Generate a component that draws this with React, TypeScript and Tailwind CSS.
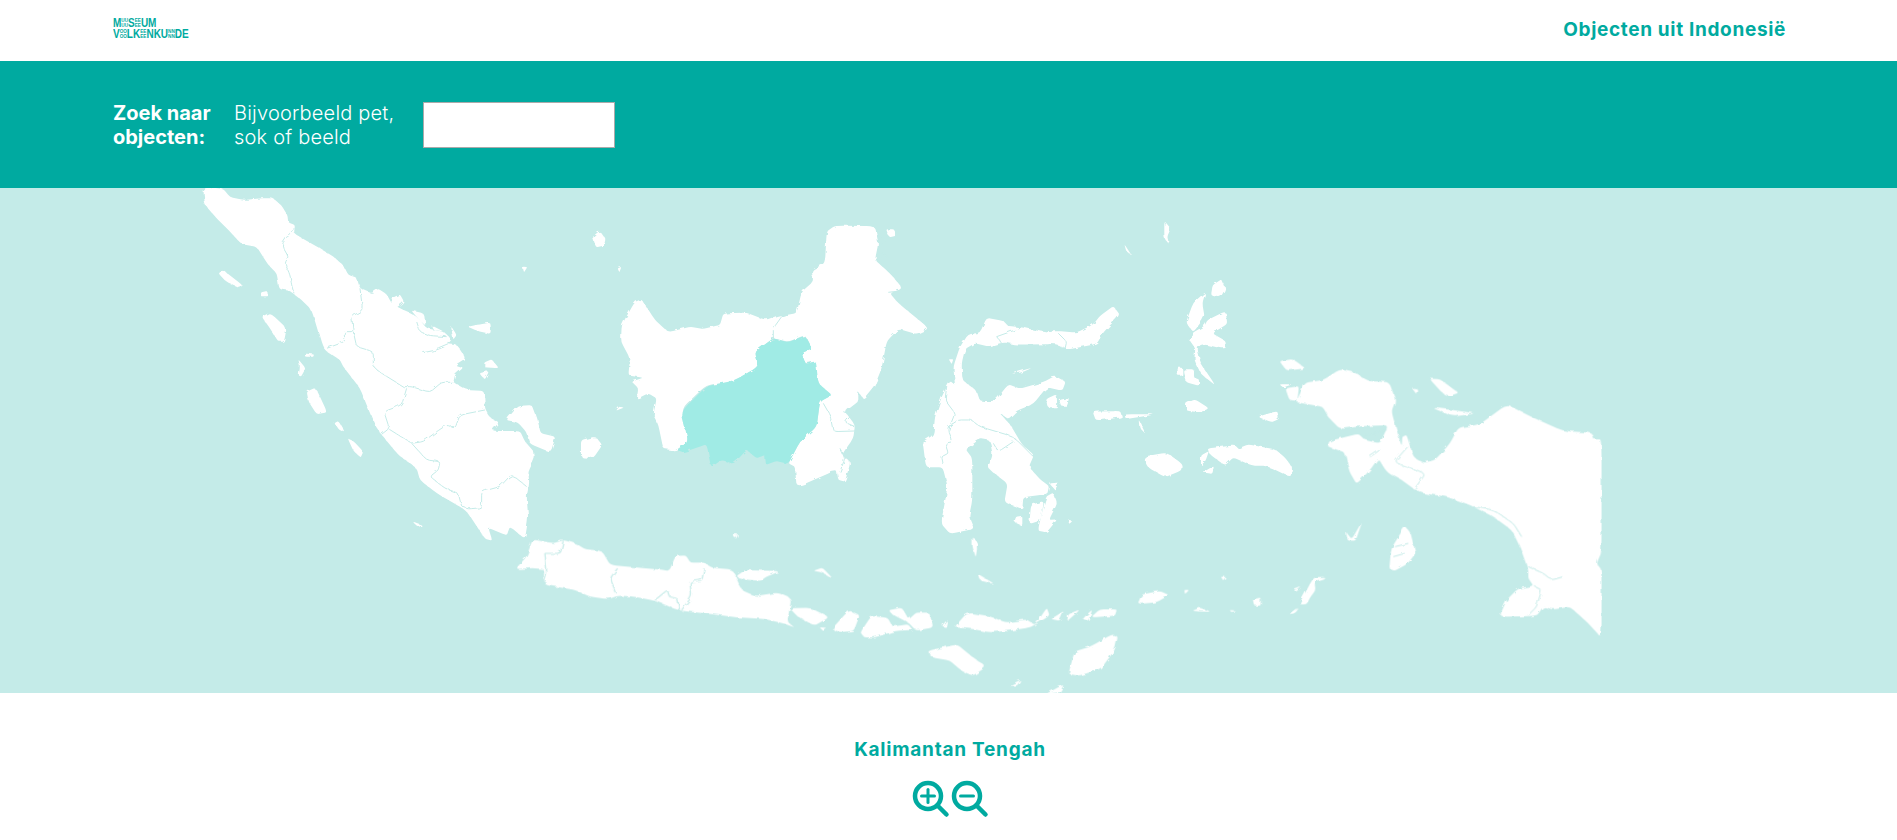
import { ReactElement } from "react";

const LAND = "#ffffff";
const SEA = "#c4ebe8";
const ACTIVE = "#a0ebe5";

interface MapPart {
  // placement of the part in page coordinates
  transform: string;
  land: string[];
  borders?: string[];
}

// cuts only the tips of the corners, so thin islands keep their size
const softPath = (points: string, closed: boolean) => {
  const p = points.split(" ").map((pair) => pair.split(",").map(Number));
  const toward = (a: number[], b: number[]) => `${a[0] + (b[0] - a[0]) * 0.22} ${a[1] + (b[1] - a[1]) * 0.22}`;
  let d = "";
  p.forEach((pt, i) => {
    const prev = p[(i - 1 + p.length) % p.length];
    const next = p[(i + 1) % p.length];
    if (!closed && (i === 0 || i === p.length - 1)) {
      d += `${i === 0 ? "M" : "L"}${pt[0]} ${pt[1]} `;
      return;
    }
    d += `${d ? "L" : "M"}${toward(pt, prev)} Q${pt[0]} ${pt[1]} ${toward(pt, next)} `;
  });
  return closed ? d + "Z" : d;
};

const sumatra: MapPart = {
  transform: "translate(190 185) scale(0.3333)",
  land: [
    "40,15 70,8 100,12 120,36 160,45 210,40 250,40 275,62 292,90 295,112 315,120 312,145 345,165 390,190 430,215 460,240 475,270 500,278 510,310 545,325 565,311 590,328 605,355 630,370 665,385 690,405 710,430 760,440 782,460 770,475 800,478 827,520 795,540 820,548 795,570 790,592 830,615 882,618 885,670 900,698 927,712 905,738 990,738 1005,770 1032,800 1035,820 1015,860 1018,895 1010,935 1015,1000 1005,1062 960,1025 950,1052 895,1028 907,1067 885,1062 835,985 810,965 740,925 690,885 680,850 625,810 575,750 555,720 530,660 510,610 460,545 450,525 400,492 365,375 335,345 300,318 268,312 260,265 235,240 200,185 155,178 120,140 75,95 45,60",
    "85,265 100,256 157,300 150,310 110,292",
    "215,395 240,383 290,430 282,470 265,470 240,430",
    "345,506 372,508 370,515 345,515",
    "325,523 347,550 334,574 326,572 330,545",
    "350,620 377,608 412,682 380,688 356,650",
    "433,715 445,708 464,740 445,732",
    "473,760 490,768 520,800 512,818 490,797",
    "668,1010 697,1020 685,1027",
    "603,340 630,328 642,350 620,368 606,360",
    "663,376 702,385 707,422 690,407",
    "948,705 985,663 1027,660 1042,700 1052,745 1097,755 1082,802 1020,777 1008,740 983,712",
    "1173,765 1217,755 1237,780 1210,820 1173,817",
    "833,425 870,418 902,413 902,447 860,437",
    "883,532 905,523 927,550 883,547",
    "868,565 897,558 885,584",
    "723,420 762,440 730,434",
    "783,423 800,450 790,464",
    "1208,155 1228,138 1247,160 1242,182 1218,187",
    "213,322 232,318 234,334 213,334",
    "998,245 1012,246 1002,262",
  ],
  borders: [
    "312,130 295,150 275,180 295,215 285,235 300,270 305,300 312,325",
    "510,310 518,375 485,395 490,440 462,440 465,470 410,490",
    "490,440 500,485 550,500 550,545 575,565 640,605",
    "640,605 665,605 720,622 755,592 790,592",
    "650,610 635,660 582,680 598,730 575,748",
    "885,675 810,690 795,730 770,720 740,740 700,770 665,775 625,750 598,733",
    "665,775 710,825 750,830 745,855 720,875 765,910 805,925 815,965 835,972 875,968 875,920 930,905 965,868 1010,905",
    "680,410 690,440 720,452 770,455",
    "700,503 740,495 780,478",
  ],
};

const java: MapPart = {
  transform: "translate(500 530) scale(0.408 0.3333)",
  land: [
    "38,117 65,80 80,28 130,40 155,30 185,40 210,58 250,63 270,105 340,113 390,118 415,123 430,78 455,76 467,98 500,98 520,113 570,118 592,180 625,198 680,188 714,205 704,275 722,292 700,282 650,267 580,262 520,252 440,242 380,212 330,200 290,197 265,207 220,200 185,180 108,164 108,117 80,114",
    "578,140 600,120 687,123 650,142 640,152 610,150",
    "710,235 760,233 807,262 770,287 730,260",
    "813,297 855,241 882,255 867,302 835,307",
    "883,307 910,258 950,263 962,290 1000,283 1012,300 970,302 920,322 893,322",
    "953,240 985,233 1002,268 1020,248 1052,248 1062,292 1020,302 1000,277 960,252",
    "1113,292 1145,248 1200,258 1240,278 1290,268 1312,285 1340,233 1347,257 1300,292 1250,302 1200,307 1160,297",
    "1350,267 1382,243 1372,272",
    "1393,252 1422,238 1390,274",
    "1428,267 1452,238 1442,272",
    "1448,262 1470,238 1512,238 1507,257",
    "1048,362 1120,343 1152,375 1192,410 1160,437 1130,422 1103,392 1058,382",
    "1393,432 1408,365 1450,348 1500,313 1514,320 1507,360 1472,417 1420,437",
    "1338,492 1382,463 1372,487",
    "1248,467 1277,448 1267,467",
    "768,122 790,113 817,147 790,127",
    "1158,20 1170,50 1166,82 1158,50",
    "1173,133 1212,162 1178,152",
    "1083,287 1097,268 1092,292",
    "783,292 800,293 790,300",
    "570,15 584,13 578,26",
  ],
  borders: [
    "110,70 148,70 155,32",
    "110,70 115,130 108,160",
    "288,115 270,145 285,190",
    "500,115 495,150 465,155 470,200 445,240",
    "380,210 410,180 415,200 435,205 440,240",
  ],
};

const kalimantan: MapPart = {
  transform: "translate(600 185) scale(0.3333)",
  land: [
    "65,420 105,350 125,343 165,405 205,442 270,425 310,432 360,420 370,385 440,383 495,405 540,390 545,395 520,460 465,500 475,545 400,590 320,600 245,670 265,770 225,797 190,792 175,720 160,690 170,640 145,625 110,642 115,610 95,590 130,578 85,572 90,520 63,470",
    "520,460 525,420 545,392 590,385 605,320 640,290 635,255 675,235 680,140 705,122 825,123 835,175 825,225 870,265 907,310 870,325 895,355 987,430 950,447 895,432 860,470 845,550 825,600 790,642 775,620 775,650 735,680 765,720 760,760 725,810 752,830 735,890 715,885 710,855 590,907 585,845 565,835 600,770 650,725 660,650 695,630 655,595 645,530 615,535 605,505 635,490 615,450 565,470",
    "858,133 882,133 890,152 868,157",
    "58,665 72,668 48,677",
    "53,250 64,246 58,262",
  ],
  borders: [
    "670,655 690,690 700,740 765,738",
    "545,395 520,430 520,460",
    "835,150 860,165 830,195 865,215 825,225",
    "865,322 900,318",
    "730,680 755,690 735,712 765,725",
    "850,560 825,600",
    "720,790 735,820 720,860",
  ],
};

const kalimantanTengah =
  "520,460 565,472 615,452 635,490 605,505 618,538 648,528 655,595 697,630 660,650 650,725 600,770 565,837 530,828 498,840 495,810 470,820 440,795 400,837 365,825 333,847 320,778 290,788 250,802 230,795 265,770 243,680 320,603 400,588 475,545 465,500";

const sulawesi: MapPart = {
  transform: "translate(900 200) scale(0.3333)",
  land: [
    "68,725 100,705 105,650 125,590 150,543 165,555 160,500 180,440 205,403 240,398 260,353 310,363 325,378 370,383 440,398 470,393 530,398 580,373 600,348 640,318 660,345 610,397 590,432 500,449 470,432 350,434 310,427 265,439 225,430 195,447 185,490 187,540 230,573 240,603 285,603 325,553 360,566 430,546 465,528 497,545 487,572 440,562 400,612 350,632 325,657 300,640 330,673 367,735 402,765 387,800 420,838 447,858 442,882 370,892 367,927 313,907 323,850 263,805 278,765 270,722 240,717 197,748 217,775 217,900 207,950 222,987 150,1002 123,970 143,860 128,802 78,802",
    "438,597 470,583 472,622 443,622",
    "478,600 507,593 502,617 483,617",
    "438,890 460,878 472,910 447,960 472,958 440,997 413,992",
    "393,915 432,903 422,962 388,972",
    "348,950 367,948 367,977 343,967",
    "448,850 477,848 465,870",
    "333,522 397,503 367,517",
    "220,1010 232,1030 225,1052",
    "146,478 160,478 155,492",
    "793,63 812,85 802,110 807,132 793,115",
    "676,136 697,167 682,157",
    "858,367 880,308 917,276 907,310 914,352 880,397",
    "938,255 965,238 977,265 962,292 933,287",
    "923,360 977,333 982,372 937,400 977,423 977,447 905,432 892,445 902,490 947,557 903,522 883,480 886,445 868,420 878,398 913,378",
    "848,508 882,508 882,533 897,538 897,557 858,547",
    "833,503 847,503 847,527 833,527",
    "858,610 885,598 927,625 900,637 858,632",
    "578,635 660,633 667,652 588,662",
    "673,643 772,643 678,657",
    "716,658 737,702 718,682",
    "730,770 800,758 845,790 844,812 795,832 743,802",
    "923,745 1005,736 1015,745 1045,733 1125,748 1152,770 1177,800 1172,832 1100,797 1055,797 1000,772 975,797 928,762",
    "903,767 927,753 917,782 903,797",
    "908,817 942,798 937,822",
    "1073,650 1132,633 1137,657 1115,667",
    "1138,553 1177,553 1150,562",
    "503,958 517,963 508,972",
  ],
  borders: [
    "140,560 135,600 165,640 145,690 158,725 135,730 145,760 125,770 130,795",
    "145,680 175,660 215,660 240,680 340,710 400,770",
    "280,730 295,755 340,725",
    "290,410 360,385",
    "290,410 305,430",
    "475,400 500,425 495,447",
  ],
};

const papua: MapPart = {
  transform: "translate(1280 340) scale(0.3333)",
  land: [
    "48,187 75,128 130,120 180,88 225,98 265,123 327,126 347,180 334,215 365,320 367,290 380,285 400,350 430,368 465,360 510,310 535,263 600,253 680,193 760,233 850,273 935,278 940,298 965,298 965,635 950,670 965,690 965,894 925,850 870,800 820,808 790,800 770,828 658,830 680,780 715,745 760,737 745,715 745,690 720,620 695,570 640,530 570,495 500,470 430,460 400,445 365,420 320,395 295,355 270,390 230,432 208,395 195,337 143,320 148,303 235,281 255,300 300,310 325,255 250,258 180,267 148,235 128,200 80,192",
    "448,116 480,118 537,158 510,167 490,162",
    "456,203 520,210 587,220 520,230",
    "395,143 412,146 409,162",
    "-2,63 40,58 77,85 20,92",
    "16,145 57,138 52,182 28,180",
    "333,627 375,558 392,580 407,640 382,672 345,692 328,687",
    "58,792 105,713 137,713 107,722 82,792",
    "28,822 52,803 42,820",
    "198,575 215,598 247,543 227,602 203,602",
    "38,747 62,738 45,752",
  ],
  borders: [
    "383,320 342,367 437,400 405,445",
    "765,740 785,750 770,800 745,825",
    "745,680 790,700 815,720 850,710",
    "580,500 640,510 700,550 725,590",
    "255,285 320,270",
    "345,620 385,610",
    "340,650 375,640",
    "270,350 300,330",
  ],
};

const islands: MapPart = {
  transform: "translate(1080 540) scale(0.3333)",
  land: [
    "173,192 185,163 240,153 267,165 230,187",
    "313,150 327,150 315,162",
    "338,212 360,203 392,215 355,214",
    "448,210 467,212 455,216",
    "518,178 542,173 542,197 523,197",
    "423,110 437,110 430,122",
    "658,192 700,113 737,110 702,122 707,150 675,192",
    "628,222 657,203 647,217",
  ],
};

const parts = [sumatra, java, kalimantan, sulawesi, papua, islands];

const MapPartShape = ({ part }: { part: MapPart }): ReactElement => (
  <g transform={part.transform}>
    {part.land.map((points) => (
      <path key={points} d={softPath(points, true)} fill={LAND} />
    ))}
    {part.borders?.map((points) => (
      <path key={points} d={softPath(points, false)} fill="none" stroke={SEA} strokeWidth={3} />
    ))}
  </g>
);

const ZoomIcon = ({ minus }: { minus?: boolean }) => (
  <svg width="38" height="38" viewBox="0 0 38 38" fill="none" stroke="#00aaa0" strokeLinecap="round">
    <circle cx="16" cy="16" r="13" strokeWidth="4.5" />
    <line x1="26" y1="26" x2="34.5" y2="34.5" strokeWidth="4.5" />
    <line x1="9.5" y1="16" x2="22.5" y2="16" strokeWidth="3" />
    {!minus && <line x1="16" y1="9.5" x2="16" y2="22.5" strokeWidth="3" />}
  </svg>
);

const Tiny = ({ text }: { text: string }) => (
  <span className="text-[6px] leading-[5px] font-bold">
    {text}
    <br />
    {text}
  </span>
);

const Logo = () => (
  <div className="w-[76px] -mt-[5px]">
    <div className="flex flex-col w-max scale-x-[0.77] origin-left font-['Liberation_Sans',sans-serif] font-bold text-[13px] leading-[11px] text-[#00aaa0]">
      <div className="flex items-center h-[11px]">
        <span>M</span>
        <Tiny text="UU" />
        <span>S</span>
        <Tiny text="EE" />
        <span>UM</span>
      </div>
      <div className="flex items-center h-[11px]">
        <span>V</span>
        <Tiny text="OO" />
        <span>LK</span>
        <Tiny text="EE" />
        <span>NKU</span>
        <Tiny text="NN" />
        <span>DE</span>
      </div>
    </div>
  </div>
);

export default function App() {
  return (
    <div className="h-[840px] overflow-hidden bg-white font-['Inter',sans-serif]">
      {/* Header */}
      <header className="h-[61px] flex items-center justify-between pl-[113px] pr-[111px]">
        <Logo />
        <h2 className="text-[19px] font-bold tracking-[0.035em] text-[#00aaa0]">Objecten uit Indonesië</h2>
      </header>

      {/* Search */}
      <section className="h-[127px] bg-[#00aaa0] flex items-center pl-[113px] text-white text-[20px] leading-[24px]">
        <p className="w-[121px] font-bold">
          Zoek naar
          <br />
          objecten:
        </p>
        <p className="w-[189px] font-light tracking-[0.01em]">
          Bijvoorbeeld pet,
          <br />
          sok of beeld
        </p>
        <input type="text" aria-label="Zoek" className="w-[192px] h-[46px] bg-white border-[1.5px] border-[#aaaaaa]" />
      </section>

      {/* Map */}
      <section className="h-[505px] bg-[#c4ebe8]">
        <svg className="block" width="1897" height="505" viewBox="0 188 1897 505">
          <defs>
            {/* ragged coastline */}
            <filter id="coast" filterUnits="userSpaceOnUse" x="0" y="188" width="1897" height="505">
              <feTurbulence type="fractalNoise" baseFrequency="0.16" numOctaves="2" seed="4" result="noise" />
              <feDisplacementMap in="SourceGraphic" in2="noise" scale="4" />
            </filter>
            <clipPath id="map-edge">
              <rect x="0" y="188" width="1602" height="505" />
            </clipPath>
          </defs>
          <g clipPath="url(#map-edge)">
            <g filter="url(#coast)">
              {parts.map((part) => (
                <MapPartShape key={part.transform} part={part} />
              ))}
              <g transform={kalimantan.transform}>
                <path d={softPath(kalimantanTengah, true)} fill={ACTIVE} />
              </g>
            </g>
          </g>
        </svg>
      </section>

      {/* Selected province */}
      <section className="flex flex-col items-center pt-[45px] pl-[3px]">
        <h3 className="text-[19px] leading-[24px] font-bold tracking-[0.04em] text-[#00aaa0]">Kalimantan Tengah</h3>
        <div className="flex gap-[1px] mt-[18px]">
          <ZoomIcon />
          <ZoomIcon minus />
        </div>
      </section>
    </div>
  );
}
